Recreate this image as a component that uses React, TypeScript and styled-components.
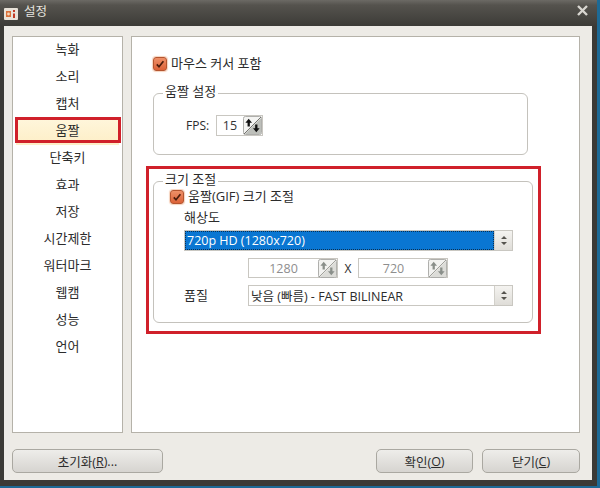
import * as React from 'react';
import styled, {createGlobalStyle} from 'styled-components';

const Global = createGlobalStyle`
    html, body {
        margin: 0;
        padding: 0;
        width: 600px;
        height: 488px;
        overflow: hidden;
        background: #1d6a96;
    }
    * {
        box-sizing: border-box;
    }
`;

const FONT = `"Open Sans", "Noto Sans CJK KR", sans-serif`;

const Win = styled.div`
    position: relative;
    width: 597px;
    height: 486px;
    display: flex;
    flex-direction: column;
    background: #3b3a36;
    padding: 0 5px 6px 4px;
    font-family: ${FONT};
    font-size: 13px;
    color: #2c2c2c;
`;

const TitleBar = styled.div`
    height: 26px;
    margin: 0 -5px 0 -4px;
    padding: 0 9px 5px 4px;
    display: flex;
    align-items: center;
    gap: 6px;
    background: linear-gradient(#6c6a65 0, #55534e 5px, #3c3b37 26px);
    color: #e6e4df;
    font-size: 12.5px;
`;

const TitleIcon = styled.span`
    display: block;
    height: 14px;
    margin-top: 7px;
    line-height: 0;
`;

const TitleText = styled.span`
    flex: 1;
`;

const Content = styled.div`
    flex: 1;
    display: flex;
    flex-direction: column;
    background: #edebe6;
    padding: 10px 12px 7px 8px;
`;

const Main = styled.div`
    display: flex;
    gap: 8px;
    height: 397px;
`;

const Side = styled.div`
    width: 111px;
    background: #fff;
    border: 1px solid #b5b2a9;
    padding: 0 3px;
`;

const SideItem = styled.div<{$active?: boolean}>`
    height: 27px;
    padding-bottom: 5px;
    display: flex;
    align-items: center;
    justify-content: center;
    font-size: 13px;
    background: ${(p) => p.$active ? 'linear-gradient(#fff6dc, #fdeec6)' : 'transparent'};
`;

const Panel = styled.div`
    position: relative;
    flex: 1;
    background: #fff;
    border: 1px solid #b5b2a9;
    padding: 20px 0 0 21px;
`;

const CheckRow = styled.div<{$indent?: number}>`
    height: 14px;
    display: flex;
    align-items: center;
    gap: 4px;
    margin-left: ${(p) => p.$indent || 0}px;
    white-space: nowrap;
`;

const CheckLabel = styled.span`
    line-height: 14px;
    padding-bottom: 2px;
`;

const CheckBox = styled.span`
    width: 14px;
    height: 14px;
    display: block;
    flex: none;
    border-radius: 3px;
    border: 1px solid #b5552f;
    background: linear-gradient(#ee9068, #dc6238);
    box-shadow: 0 0 1px 1px #f6d3be;
    line-height: 0;
`;

const Group = styled.div<{$width: number; $height: number; $top: number}>`
    position: relative;
    width: ${(p) => p.$width}px;
    height: ${(p) => p.$height}px;
    margin-top: ${(p) => p.$top}px;
    border: 1px solid #c4c2bc;
    border-radius: 6px;
`;

const GroupTitle = styled.span`
    position: absolute;
    left: 9px;
    top: -13px;
    padding: 0 2px;
    background: #fff;
    line-height: 20px;
    font-size: 13px;
`;

const FpsRow = styled.div`
    display: flex;
    align-items: center;
    padding: 21px 0 0 32px;
`;

const FpsLabel = styled.span`
    width: 30px;
    flex: none;
    font-size: 12px;
`;

const SpinBox = styled.div<{$width: number; $disabled?: boolean}>`
    width: ${(p) => p.$width}px;
    height: ${(p) => p.$disabled ? 20 : 21}px;
    display: flex;
    align-items: center;
    border: 1px solid #c9c7c1;
    background: #fff;
    color: ${(p) => p.$disabled ? '#8e8e8e' : '#333'};
`;

const SpinValue = styled.span`
    flex: 1;
    text-align: center;
    font-size: 12.5px;
`;

const SpinWrap = styled.div`
    flex: none;
    width: 19px;
    height: 19px;
    display: block;
    line-height: 0;
`;

const GroupBody = styled.div`
    padding: 8px 19px 0 30px;
`;

const FieldLabel = styled.div`
    height: 16px;
    margin-top: 5px;
    line-height: 16px;
    font-size: 13px;
`;

const Combo = styled.div<{$selected?: boolean}>`
    flex: 1;
    height: 21px;
    display: flex;
    align-items: stretch;
    background: #fff;
    border: 1px solid #c9c7c1;
    font-size: 12.5px;
    margin-top: ${(p) => p.$selected ? 5 : 0}px;
`;

const ComboText = styled.div<{$selected?: boolean}>`
    flex: 1;
    display: flex;
    align-items: center;
    padding-left: 2px;
    white-space: nowrap;
    background: ${(p) => p.$selected ? '#0a76d2' : '#fff'};
    color: ${(p) => p.$selected ? '#fff' : '#2c2c2c'};
    outline: ${(p) => p.$selected ? '1px dotted #0b2f50' : 'none'};
    outline-offset: -1px;
`;

const ComboArrow = styled.div`
    width: 18px;
    flex: none;
    display: flex;
    align-items: center;
    justify-content: center;
    background: linear-gradient(#f4f3f0, #dfddd8);
    border-left: 1px solid #d2d0ca;
`;

const SizeRow = styled.div`
    display: flex;
    align-items: center;
    margin: 7px 0 7px 64px;
`;

const Times = styled.span`
    width: 20px;
    text-align: center;
    font-size: 12px;
`;

const QualityRow = styled.div`
    display: flex;
    align-items: center;
`;

const QualityLabel = styled.span`
    width: 64px;
    padding-bottom: 2px;
    font-size: 13px;
`;

const Footer = styled.div`
    display: flex;
    margin-top: 16px;
    gap: 9px;
`;

const Btn = styled.div<{$width: number}>`
    width: ${(p) => p.$width}px;
    height: 24px;
    display: flex;
    align-items: center;
    justify-content: center;
    border: 1px solid #aaa8a1;
    border-radius: 5px;
    background: linear-gradient(#eeedea, #d6d4d0);
    font-size: 12.5px;
    color: #2c2c2c;
`;

const Spacer = styled.div`
    flex: 1;
`;

const Mnemonic = styled.span`
    text-decoration: underline;
`;

const RedBox = styled.div<{$x: number; $y: number; $w: number; $h: number}>`
    position: absolute;
    left: ${(p) => p.$x}px;
    top: ${(p) => p.$y}px;
    width: ${(p) => p.$w}px;
    height: ${(p) => p.$h}px;
    border: 3px solid #d0202a;
    pointer-events: none;
`;

const Check = () => (
    <CheckBox>
        <svg width='12' height='12' viewBox='0 0 12 12'>
            <path d='M2.8 6.4 L5 8.8 L9.4 3.2' fill='none' stroke='#4a1c0c' strokeWidth='1.7'/>
        </svg>
    </CheckBox>
);

const SpinIcon = ({disabled}: {disabled?: boolean}) => {
    const arrow = disabled ? '#8a8f8a' : '#111';
    return (
        <SpinWrap>
            <svg width='19' height='19' viewBox='0 0 20 20'>
                <rect x='0.5' y='0.5' width='19' height='19' rx='2' fill={disabled ? '#f2f2f0' : '#f4f4f2'} stroke='#a9a9a5'/>
                <path d='M19 2 L19 18 Q19 19 18 19 L2 19 Z' fill={disabled ? '#dcdcd8' : '#bdbfba'}/>
                <path d='M1 19 L19 1' stroke={disabled ? '#9a9a96' : '#6a6a66'} strokeWidth='1'/>
                <path d='M6 3 L9.5 7 L7.2 7 L7.2 11 L4.8 11 L4.8 7 L2.5 7 Z' fill={arrow}/>
                <path d='M14 17 L10.5 13 L12.8 13 L12.8 9 L15.2 9 L15.2 13 L17.5 13 Z' fill={arrow}/>
            </svg>
        </SpinWrap>
    );
};

const ComboIcon = () => (
    <svg width='8' height='11' viewBox='0 0 8 11'>
        <path d='M4 1 L7 4 L1 4 Z M4 10 L1 7 L7 7 Z' fill='#55534e'/>
    </svg>
);

const AppIcon = () => (
    <TitleIcon>
        <svg width='14' height='14' viewBox='0 0 14 14'>
            <rect x='0' y='1' width='14' height='12' rx='1' fill='#e8e2d8'/>
            <rect x='2' y='4' width='5' height='6' fill='#d9703a'/>
            <circle cx='4.5' cy='7' r='1.4' fill='#f3d7b8'/>
            <rect x='9' y='3' width='2' height='2' fill='#c23b26'/>
            <rect x='9' y='6.5' width='2' height='4.5' fill='#c23b26'/>
        </svg>
    </TitleIcon>
);

const CloseIcon = () => (
    <svg width='11' height='11' viewBox='0 0 11 11'>
        <path d='M1 1 L10 10 M10 1 L1 10' stroke='#d8d6d0' strokeWidth='2.4'/>
    </svg>
);

const MENU = ['녹화', '소리', '캡처', '움짤', '단축키', '효과', '저장', '시간제한', '워터마크', '웹캠', '성능', '언어'];

export default function App() {
    return (
        <Win>
            <Global/>
            <TitleBar>
                <AppIcon/>
                <TitleText>설정</TitleText>
                <CloseIcon/>
            </TitleBar>
            <Content>
                <Main>
                    <Side>
                        {MENU.map((m) => <SideItem key={m} $active={m === '움짤'}>{m}</SideItem>)}
                    </Side>
                    <Panel>
                        <CheckRow>
                            <Check/>
                            <CheckLabel>마우스 커서 포함</CheckLabel>
                        </CheckRow>
                        <Group $width={375} $height={62} $top={22}>
                            <GroupTitle>움짤 설정</GroupTitle>
                            <FpsRow>
                                <FpsLabel>FPS:</FpsLabel>
                                <SpinBox $width={47}>
                                    <SpinValue>15</SpinValue>
                                    <SpinIcon/>
                                </SpinBox>
                            </FpsRow>
                        </Group>
                        <Group $width={380} $height={142} $top={26}>
                            <GroupTitle>크기 조절</GroupTitle>
                            <GroupBody>
                                <CheckRow $indent={-14}>
                                    <Check/>
                                    <CheckLabel>움짤(GIF) 크기 조절</CheckLabel>
                                </CheckRow>
                                <FieldLabel>해상도</FieldLabel>
                                <Combo $selected>
                                    <ComboText $selected>720p HD (1280x720)</ComboText>
                                    <ComboArrow><ComboIcon/></ComboArrow>
                                </Combo>
                                <SizeRow>
                                    <SpinBox $width={90} $disabled>
                                        <SpinValue>1280</SpinValue>
                                        <SpinIcon disabled/>
                                    </SpinBox>
                                    <Times>X</Times>
                                    <SpinBox $width={90} $disabled>
                                        <SpinValue>720</SpinValue>
                                        <SpinIcon disabled/>
                                    </SpinBox>
                                </SizeRow>
                                <QualityRow>
                                    <QualityLabel>품질</QualityLabel>
                                    <Combo>
                                        <ComboText>낮음 (빠름) - FAST BILINEAR</ComboText>
                                        <ComboArrow><ComboIcon/></ComboArrow>
                                    </Combo>
                                </QualityRow>
                            </GroupBody>
                        </Group>
                    </Panel>
                </Main>
                <Footer>
                    <Btn $width={151}>초기화(<Mnemonic>R</Mnemonic>)...</Btn>
                    <Spacer/>
                    <Btn $width={97}>확인(<Mnemonic>O</Mnemonic>)</Btn>
                    <Btn $width={98}>닫기(<Mnemonic>C</Mnemonic>)</Btn>
                </Footer>
            </Content>
            <RedBox $x={15} $y={117} $w={106} $h={26}/>
            <RedBox $x={146} $y={166} $w={395} $h={168}/>
        </Win>
    );
}
